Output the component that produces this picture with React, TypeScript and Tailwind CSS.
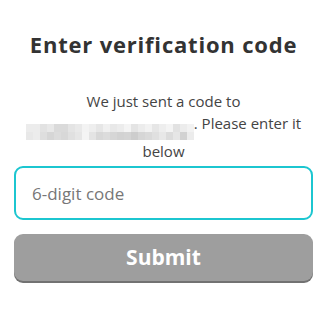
import React from "react";

const topRow = [
  "bg-[#ececec]", "bg-[#ececec]", "bg-[#e2e2e2]", "bg-[#e8e8e8]", "bg-[#dadada]", "bg-[#dadada]", "bg-[#e4e4e4]", "bg-[#e9e9e9]",
  "bg-[#f3f3f3]", "bg-[#eeeeee]", "bg-[#e6e6e6]", "bg-[#f0f0f0]", "bg-[#e8e8e8]", "bg-[#ececec]", "bg-[#f4f4f4]", "bg-[#e4e4e4]",
  "bg-[#ececec]", "bg-[#f2f2f2]", "bg-[#e6e6e6]", "bg-[#eeeeee]", "bg-[#f4f4f4]", "bg-[#e2e2e2]", "bg-[#ececec]", "bg-[#f2f2f2]",
];
const bottomRow = [
  "bg-[#e8e8e8]", "bg-[#ececec]", "bg-[#dedede]", "bg-[#d6d6d6]", "bg-[#dcdcdc]", "bg-[#d8d8d8]", "bg-[#e0e0e0]", "bg-[#e6e6e6]",
  "bg-[#f4f4f4]", "bg-[#e4e4e4]", "bg-[#d8d8d8]", "bg-[#dcdcdc]", "bg-[#d6d6d6]", "bg-[#d2d2d2]", "bg-[#d4d4d4]", "bg-[#cdcdcd]",
  "bg-[#d6d6d6]", "bg-[#dadada]", "bg-[#e0e0e0]", "bg-[#e8e8e8]", "bg-[#dcdcdc]", "bg-[#e6e6e6]", "bg-[#d2d2d2]", "bg-[#ececec]",
];

function Redacted() {
  return (
    <span className="inline-flex flex-col align-[-3px] w-[168px]">
      <span className="flex h-[8px]">
        {topRow.map((c, i) => (
          <span key={i} className={`${c} w-[7px] h-full`} />
        ))}
      </span>
      <span className="flex h-[8px]">
        {bottomRow.map((c, i) => (
          <span key={i} className={`${c} w-[7px] h-full`} />
        ))}
      </span>
    </span>
  );
}

export default function App() {
  return (
    <div className="w-[336px] h-[311px] bg-white pl-[14px] pr-[23px] pt-[28px] font-['Open_Sans',sans-serif]">
      <h1 className="text-center text-[22px] leading-[32px] font-bold tracking-[0.8px] text-[#333333]">
        Enter verification code
      </h1>
      <p className="mt-[30px] text-center text-[15px] leading-[22px] text-[#444444]">
        We just sent a code to <Redacted />. Please enter it below
      </p>
      <input
        type="text"
        placeholder="6-digit code"
        className="mt-[4px] block w-full h-[54px] rounded-[9px] border-2 border-[#1cc6d0] px-[16px] text-[17px] text-[#333333] placeholder:text-[#777777] outline-none"
      />
      <button className="mt-[14px] block w-full h-[47px] rounded-[9px] bg-[#9e9e9e] shadow-[0_2px_0_#727272] text-white text-[21px] font-bold">
        Submit
      </button>
    </div>
  );
}
